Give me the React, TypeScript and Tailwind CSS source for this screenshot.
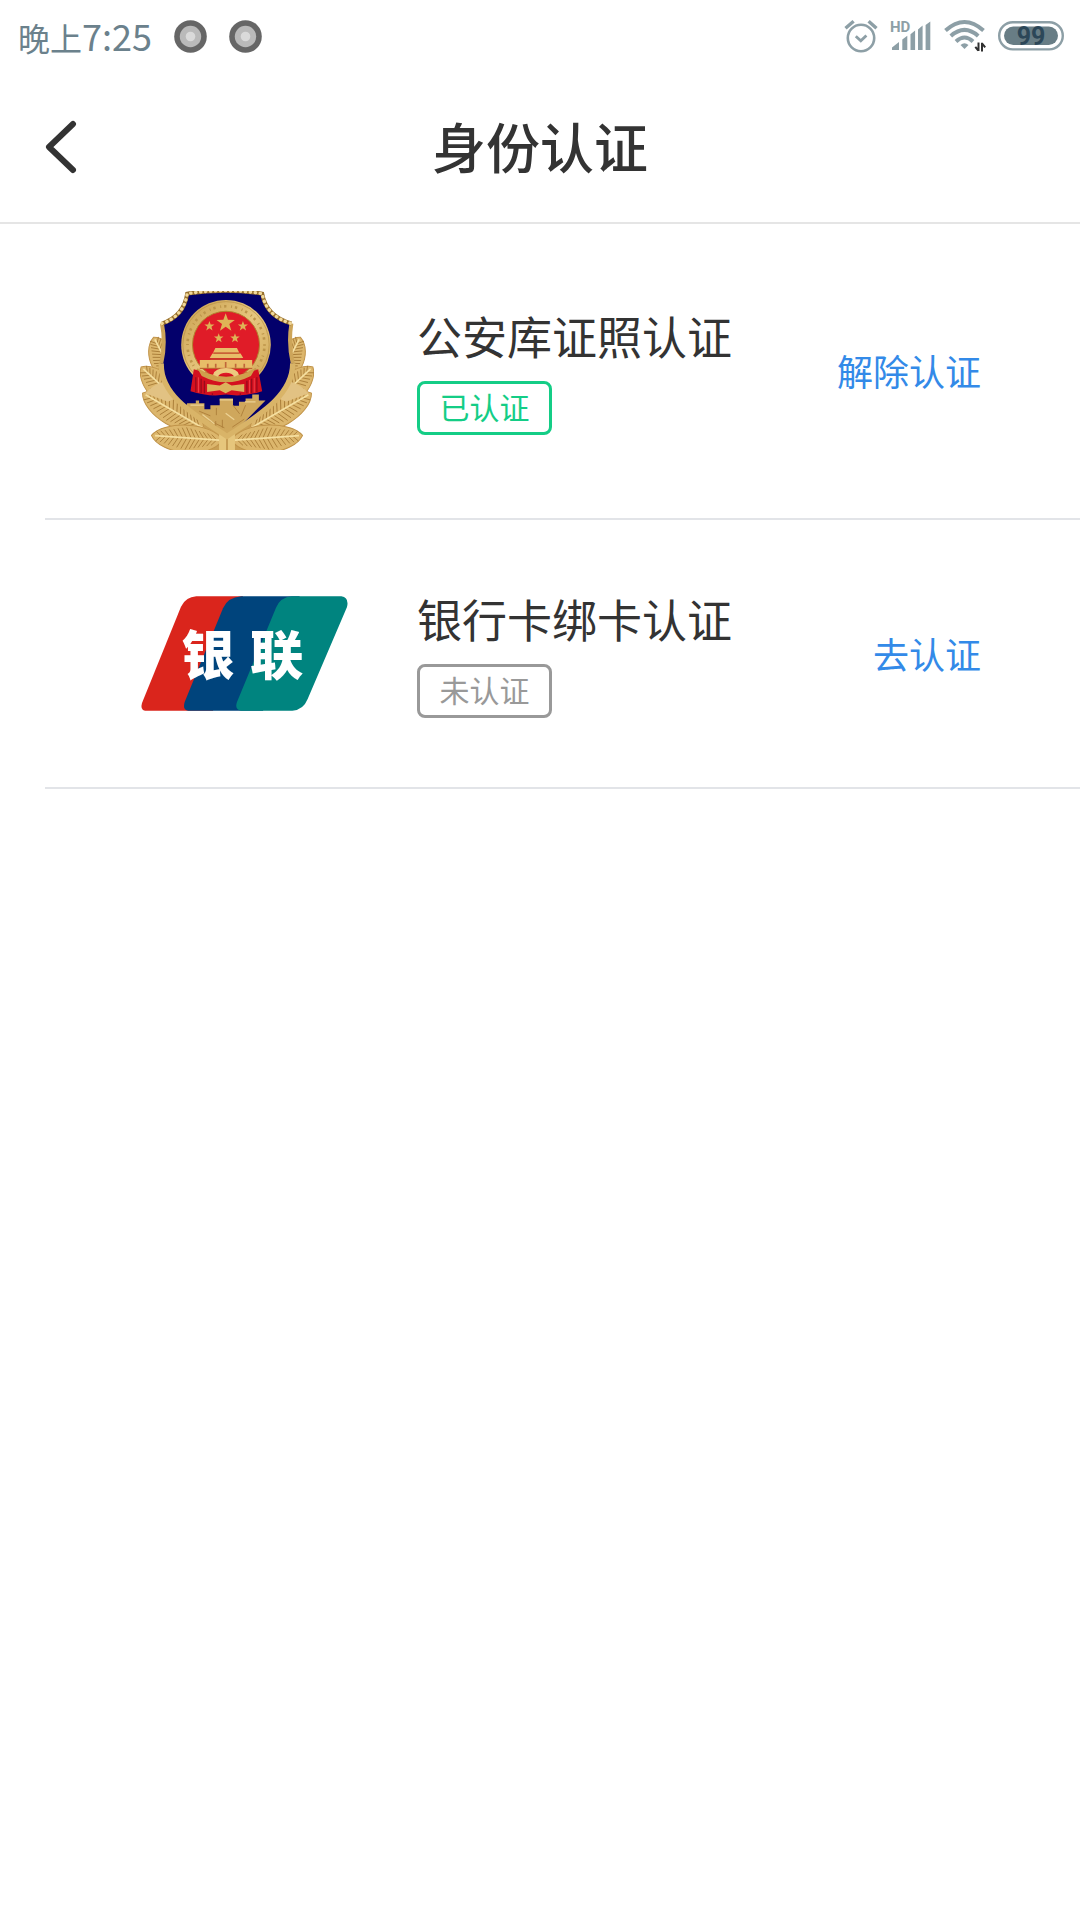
import type { ReactNode } from "react";

function RecordDot() {
  return (
    <svg viewBox="0 0 33 33" className="size-[33px]" aria-hidden="true">
      <circle cx="16.5" cy="16.5" r="16.3" fill="#666" />
      <circle cx="16.5" cy="16.5" r="10.7" fill="#bababa" />
      <circle cx="16.5" cy="16.5" r="4.8" fill="#dadada" />
    </svg>
  );
}

function AlarmIcon() {
  return (
    <svg viewBox="0 0 34 34" className="h-[34px] w-[34px]" fill="none" stroke="#8d9fa6" aria-hidden="true">
      <circle cx="17" cy="19" r="13.2" strokeWidth="2.6" />
      <path d="M11.8 17.2l5 4.6 5.6-5.4" strokeWidth="2.8" />
      <path d="M1.5 9.2L9.6 2.2M32.5 9.2L24.6 2.2" strokeWidth="3.4" />
    </svg>
  );
}

function SignalIcon() {
  return (
    <svg viewBox="0 -6 42 44" className="h-[44px] w-[42px]" fill="#8d9fa6" aria-hidden="true">
      <path d="M2 30v-2.500l7-5.500v8zM12.300 30V19.500l5-3.800V30zM20.500 30V14.200l4.600-3.600V30zM28 30V9.400l4.600-4V30zM35.600 30V5l4.700-3.600V30z" />
      <text x="0" y="11.500" fontSize="15" fontWeight="700" fontFamily="Roboto, sans-serif">
        HD
      </text>
    </svg>
  );
}

function WifiIcon() {
  return (
    <svg viewBox="0 0 42 34" className="h-[34px] w-[42px]" fill="none" stroke="#8d9fa6" strokeWidth="4" aria-hidden="true">
      <path d="M1.500 11.500Q20.500 -5.500 39.500 11.500" />
      <path d="M6.800 17Q20.500 4.800 34.200 17" />
      <path d="M12 22.500Q20.500 14.500 29 22.500" />
      <path d="M16.500 26q4-3.500 8 0l-4 4z" fill="#8d9fa6" stroke="none" />
      <path d="M34.500 23.500v8.500M31.300 27.800l3 3.700M38 32.500v-8.800M38 24.300l3.200 4" stroke="#303030" strokeWidth="2" />
    </svg>
  );
}

function BatteryIcon() {
  return (
    <svg viewBox="0 0 66 30" className="h-[30px] w-[66px]" role="img" aria-label="99">
      <rect x="1.200" y="1.200" width="63.600" height="27.200" rx="13.600" fill="#fff" stroke="#8d9fa6" strokeWidth="2.400" />
      <rect x="6" y="5.500" width="54" height="18.500" rx="9.250" fill="#687d85" />
      <text x="33" y="23.500" textAnchor="middle" fontSize="25" fontWeight="700" fontFamily="Roboto, sans-serif" fill="#2c4758">
        99
      </text>
    </svg>
  );
}

function StatusBar() {
  return (
    <div className="flex h-[72px] items-center justify-between pl-[18px] pr-4">
      <div className="flex items-center">
        <div className="flex items-baseline pb-0.5 leading-none text-[#6b818c]">
          <span className="text-[32px]">晚上</span>
          <span className="text-[36px] leading-none">7:25</span>
        </div>
        <div className="ml-[22px] flex gap-[22px]">
          <RecordDot />
          <RecordDot />
        </div>
      </div>
      <div className="flex items-center">
        <AlarmIcon />
        <div className="ml-3">
          <SignalIcon />
        </div>
        <div className="ml-3">
          <WifiIcon />
        </div>
        <div className="ml-3">
          <BatteryIcon />
        </div>
      </div>
    </div>
  );
}

const leaves = [
  { x: 140, y: 310, angle: -117, length: 156 },
  { x: 166, y: 386, angle: -137, length: 184 },
  { x: 220, y: 446, angle: -150, length: 213 },
  { x: 276, y: 482, angle: 184, length: 214 },
];

const veins = [0.08, 0.14, 0.2, 0.26, 0.32, 0.38, 0.44, 0.5, 0.56, 0.62, 0.68, 0.74, 0.8, 0.86];

function Leaf({ x, y, angle, length }: { x: number; y: number; angle: number; length: number }) {
  const l = length;
  return (
    <g transform={`translate(${x} ${y}) rotate(${angle})`}>
      <path
        d={`M0 0C${l * 0.15} -60 ${l * 0.85} -58 ${l} 0C${l * 0.85} 48 ${l * 0.15} 54 0 0z`}
        fill="#dcb66c"
        stroke="#c1944a"
        strokeWidth="3"
      />
      {veins.map((v) => (
        <path
          key={v}
          d={`M${l * v} 0l16 -${36 - Math.abs(v - 0.45) * 50}M${l * v} 0l16 ${32 - Math.abs(v - 0.45) * 46}`}
          stroke="#a67a35"
          strokeWidth="2.500"
          fill="none"
        />
      ))}
      <path d={`M0 0H${l * 0.95}`} stroke="#f5dfa0" strokeWidth="5" />
    </g>
  );
}

const shield =
  "M170 40Q287 22 396 40Q408 108 484 130Q474 190 488 250C488 350 380 410 290 470C200 410 88 350 92 250Q106 190 94 130Q160 108 170 40z";

const stars = [
  { x: 286, y: 128, r: 29 },
  { x: 237, y: 138, r: 16 },
  { x: 338, y: 138, r: 16 },
  { x: 265, y: 174, r: 15 },
  { x: 314, y: 174, r: 15 },
];

function PoliceEmblem() {
  return (
    <svg viewBox="28 32 524 482" className="h-[160px] w-[174px]" role="img" aria-label="公安">
      <defs>
        <linearGradient id="ring" x1="0" y1="0" x2="1" y2="1">
          <stop offset="0" stopColor="#c99f4e" />
          <stop offset="0.5" stopColor="#e6c67e" />
          <stop offset="1" stopColor="#cda453" />
        </linearGradient>
        <clipPath id="emblem-base">
          <path d="M0 0H590V511H0z" />
        </clipPath>
        <clipPath id="shield-area">
          <path d={shield} />
        </clipPath>
      </defs>
      <g clipPath="url(#emblem-base)">
        <path d="M80 280L120 400 190 450 150 511H430L390 450 460 400 500 280z" fill="#c99f55" />
        {leaves.map((leaf) => (
          <Leaf key={leaf.y} {...leaf} />
        ))}
        <g transform="translate(580 0) scale(-1 1)">
          {leaves.map((leaf) => (
            <Leaf key={leaf.y} {...leaf} />
          ))}
        </g>
        <path d="M44 340Q64 314 108 302L146 350 112 366zM536 340Q516 314 472 302L434 350 468 366z" fill="#e2c283" />
        <path d="M266 462l24-12 24 12v52h-48z" fill="#e6c67c" />
        <path d="M290 470V514" stroke="#b58740" strokeWidth="4" />

        <path d={shield} fill="#03006b" />
        <g clipPath="url(#shield-area)">
          <path d="M170 370h26v-8h10v8h16v18h18v-12h28v-20h40v22h18v-12h20v-10h20v-12h20v18h20L290 480 160 400z" fill="#cfa75c" />
          <path d="M206 394l34 14M258 384v22M308 376l20 26M346 376l-14 34M236 422l46 22M306 442l36-24M256 424v20M276 420v24" stroke="#b0823d" strokeWidth="3" />
          <path d="M268 360h40M180 376h40M216 404l36 28M286 400l26 20M344 366h32" stroke="#ecd193" strokeWidth="4" />
        </g>
        <path d="M92 250C88 350 200 410 290 470C380 410 488 350 488 250" fill="none" stroke="#d9b468" strokeWidth="16" />
        <path d="M94 130Q106 190 92 250M484 130Q474 190 488 250" fill="none" stroke="#cda55a" strokeWidth="12" />
        <path
          d="M94 130Q160 108 170 40Q287 22 396 40Q408 108 484 130"
          fill="none"
          stroke="#98702d"
          strokeWidth="12"
        />
        <path
          d="M94 130Q160 108 170 40Q287 22 396 40Q408 108 484 130"
          fill="none"
          stroke="#f1d99b"
          strokeWidth="10"
          strokeLinecap="round"
          strokeDasharray="1 14"
        />

        <circle cx="287" cy="194" r="135" fill="url(#ring)" />
        <circle cx="287" cy="194" r="130" fill="none" stroke="#b68d43" strokeWidth="2" />
        <circle cx="287" cy="194" r="116" fill="none" stroke="#bd954a" strokeWidth="8" strokeDasharray="3 9 7 14" />
        <circle cx="287" cy="194" r="101" fill="#e01c28" stroke="#b1832f" strokeWidth="3" />
        {stars.map((star) => (
          <path
            key={`${star.x}-${star.y}`}
            transform={`translate(${star.x} ${star.y}) scale(${star.r})`}
            d="M0-1L.24-.32.95-.31.38.12.59.81 0 .4-.59.81-.38.12-.95-.31-.24-.32z"
            fill="#dfb356"
          />
        ))}
        <path d="M255 204h65l7 14h-79zM246 220h85l8 14H238zM208 240h158v26H208z" fill="#e8bd68" />
        <path d="M250 219h76M240 237h94M208 265h158" stroke="#b5592a" strokeWidth="3" />
        <path d="M232 263v-12M256 263v-12M286 263v-17M316 263v-12M342 263v-12" stroke="#c0673a" strokeWidth="5" />
        <path d="M190 268Q287 300 384 268L396 334Q340 352 287 344Q236 352 180 334z" fill="#d4101f" />
        <path d="M200 264Q287 316 376 264L362 288Q287 326 214 288z" fill="#cfa04c" />
        <path d="M248 284Q254 264 287 264Q320 264 326 284L312 290Q305 278 287 278Q269 278 262 290z" fill="#ecca7e" />
        <path d="M230 312l38 5 18-10 18 10 38-5v24l-38-5-18 9-18-9-38 5z" fill="#dcb25c" />
        <path d="M196 292v44M212 296v44M222 302v38M246 340v6M330 340v6M350 302v38M364 296v44M380 292v44" stroke="#990b1c" strokeWidth="4" />
        <path d="M204 292v46M358 300v40M372 294v44" stroke="#f04048" strokeWidth="3" />
      </g>
    </svg>
  );
}

function UnionPayLogo() {
  return (
    <svg viewBox="31 49 624 345" className="h-[115px] w-[208px]" role="img" aria-label="银联">
      <path d="M200 50H340L250 393H46Q31 391 37 370L154 81Q168 52 200 50z" fill="#da251c" />
      <path d="M335 50H510L400 393H176Q158 391 165 367L280 86Q294 53 335 50z" fill="#00447c" />
      <path d="M487 50H635Q659 54 652 82L534 358Q521 391 488 393H334Q314 390 322 367L439 84Q452 53 487 50z" fill="#00847f" />
      <g fill="#fff" fontSize="160" fontWeight="900" fontFamily='"Noto Sans CJK SC", sans-serif'>
        <text x="155" y="285">银</text>
        <text x="361" y="285">联</text>
      </g>
    </svg>
  );
}

type VerifyRowProps = {
  icon: ReactNode;
  title: string;
  status: string;
  statusClass: string;
  action: string;
  className: string;
};

function VerifyRow({ icon, title, status, statusClass, action, className }: VerifyRowProps) {
  return (
    <li className={`ml-[45px] flex items-center border-b-2 border-[#e2e4e8] pl-[95px] pr-[99px] ${className}`}>
      <div className="w-[277px] shrink-0">{icon}</div>
      <div className="flex flex-1 flex-col items-start gap-4">
        <h2 className="text-[45px] leading-[58px] text-[#333]">{title}</h2>
        <span
          className={`flex h-[54px] w-[135px] items-center justify-center rounded-lg border-3 pb-1 text-[30px] leading-none ${statusClass}`}
        >
          {status}
        </span>
      </div>
      <button type="button" className="pb-0.5 text-[36px] leading-[48px] text-[#338ae8]">
        {action}
      </button>
    </li>
  );
}

export default function App() {
  return (
    <div className="min-h-screen bg-white font-['Noto_Sans_CJK_SC',sans-serif]">
      <StatusBar />
      <header className="grid h-[152px] grid-cols-[1fr_auto_1fr] items-center border-b-2 border-[#e5e5e5] px-[45px]">
        <button type="button" aria-label="返回" className="justify-self-start">
          <svg viewBox="0 0 32 54" className="h-[54px] w-[32px]" fill="none" stroke="#333" strokeWidth="6" strokeLinecap="round" strokeLinejoin="round">
            <path d="M28 4L4 27L28 50" />
          </svg>
        </button>
        <h1 className="pb-0.5 text-[54px] leading-[72px] font-medium text-[#333]">身份认证</h1>
      </header>
      <ul>
        <VerifyRow
          icon={<PoliceEmblem />}
          title="公安库证照认证"
          status="已认证"
          statusClass="border-[#14cd86] text-[#14cd86]"
          action="解除认证"
          className="h-[296px]"
        />
        <VerifyRow
          icon={<UnionPayLogo />}
          title="银行卡绑卡认证"
          status="未认证"
          statusClass="border-[#999] text-[#999]"
          action="去认证"
          className="h-[269px]"
        />
      </ul>
    </div>
  );
}
